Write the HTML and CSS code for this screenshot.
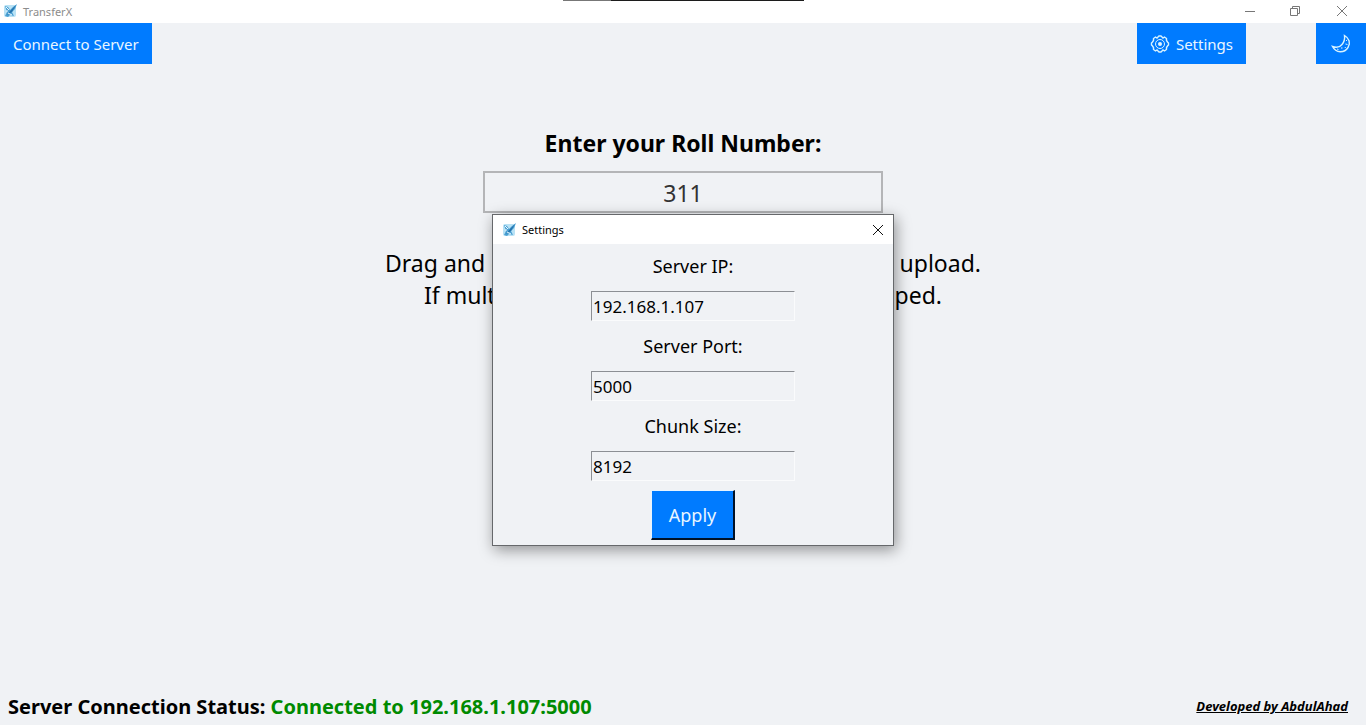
FILE: index.html
```html
<!DOCTYPE html>
<html lang="en">
<head>
<meta charset="utf-8">
<title>TransferX</title>
<link rel="stylesheet" href="styles.css">
</head>
<body>
<svg class="defs" aria-hidden="true">
  <symbol id="logo" viewBox="0 0 16 16">
    <rect x="2" y="2" width="12" height="12" rx="2" fill="#b9e2f5"/>
    <path d="M3 3l3 1 2 3 3-3 4-3-2 5-3 3 2 4-4-1-2 2-3-1 2-4z" fill="#4a9fd2"/>
    <path d="M14 2L9 7l-4 5 5-3z" fill="#2472ac"/>
    <path d="M4 4l3 3M6 10l4 2M4 8h2" stroke="#edfaff"/>
  </symbol>
</svg>
<header class="titlebar">
  <svg class="logo"><use href="#logo"/></svg>
  <span class="app-name">TransferX</span>
  <div class="window-buttons">
    <button class="window-button" aria-label="Minimize"><svg viewBox="0 0 12 12"><path d="M1 6.500h10"/></svg></button>
    <button class="window-button" aria-label="Restore"><svg viewBox="0 0 12 12"><path d="M1.500 3.500h7v7h-7zM3.500 3.500v-2h7v7h-2"/></svg></button>
    <button class="window-button" aria-label="Close"><svg viewBox="0 0 12 12"><path d="M1 1l10 10M11 1L1 11"/></svg></button>
  </div>
</header>
<div class="top-edge"></div>
<nav class="toolbar">
  <button class="tool connect">Connect to Server</button>
  <button class="tool settings">
    <svg class="gear" viewBox="0 0 20 20"><path d="M8 3l1-1h2l1 1 1 1 1.500-1 2 1.500v2l1 1.500 1 1v2l-1 1-1 1.500v2l-2 1.500-1.500-1-1 1-1 1H9l-1-1-1-1-1.500 1-2-1.500v-2l-1-1.500-1-1V9l1-1 1-1.500v-2L5.500 3 7 4z"/><circle class="ring" cx="10" cy="10" r="4.500"/><circle class="hub" cx="10" cy="10" r="2"/></svg>
    Settings
  </button>
  <button class="tool theme" aria-label="Dark mode">
    <svg class="moon" viewBox="0 0 20 20"><path d="M13.500 1.500C18 4 20 9 17 13.500 13.500 19 5 19.500 1.500 12.500c4 1.500 7.500.5 9.500-2 2.500-3 3-5.500 2.500-9z"/><path class="craters" d="M15 6l1 1M14.500 10l2 .5M10 14h1.500M6 15l1.500.5M14 13l.5 1"/></svg>
  </button>
</nav>
<main class="content">
  <label class="roll-label" for="roll">Enter your Roll Number:</label>
  <input class="roll" id="roll" value="311">
  <p class="hint">Drag and drop your files and folders on here to upload.<br>If multiple files are dropped, they will be zipped.</p>
</main>
<footer class="statusbar">
  <p class="status">Server Connection Status: <span class="connected">Connected to 192.168.1.107:5000</span></p>
  <a class="credit" href="#">Developed by AbdulAhad</a>
</footer>
<section class="dialog" role="dialog" aria-labelledby="dialog-title">
  <header class="dialog-bar">
    <svg class="logo"><use href="#logo"/></svg>
    <span id="dialog-title">Settings</span>
    <button class="dialog-close" aria-label="Close settings"><svg viewBox="0 0 12 12"><path d="M1 1l10 10M11 1L1 11"/></svg></button>
  </header>
  <form class="form">
    <label class="field-label" for="ip">Server IP:</label>
    <input class="field" id="ip" value="192.168.1.107">
    <label class="field-label" for="port">Server Port:</label>
    <input class="field" id="port" value="5000">
    <label class="field-label" for="chunk">Chunk Size:</label>
    <input class="field" id="chunk" value="8192">
    <button class="apply" type="button">Apply</button>
  </form>
</section>
</body>
</html>
```
FILE: styles.css
```css
* { box-sizing: border-box; }

body {
  margin: 0;
  min-height: 100vh;
  display: flex;
  flex-direction: column;
  position: relative;
  background: #f0f2f5;
  color: #000;
  font-family: "Noto Sans", "Open Sans", sans-serif;
}

button, input { font-family: inherit; }
button { padding: 0; border: 0; background: none; }
p { margin: 0; }
.defs { position: absolute; width: 0; height: 0; }

.titlebar {
  display: flex;
  align-items: center;
  height: 23px;
  padding: 0 0 1px 2px;
  background: #fff;
  color: #8c8c8c;
  font-size: 11px;
}
.logo { width: 16px; height: 16px; flex: none; }
.app-name { margin-left: 5px; }
.window-buttons { display: flex; margin-left: auto; height: 20px; }
.window-button {
  width: 46px;
  display: flex;
  align-items: center;
  justify-content: center;
}
.window-button svg { width: 12px; height: 12px; fill: none; stroke: #777; }
.window-button:first-child { width: 44px; }
.window-button:last-child { width: 48px; }

.top-edge {
  position: absolute;
  top: 0;
  left: 50%;
  width: 241px;
  height: 1px;
  margin-left: -120px;
  background: linear-gradient(to right, #777 48px, #1c1c1c 48px);
}

.toolbar { display: flex; }
.tool {
  display: flex;
  align-items: center;
  justify-content: center;
  gap: 6px;
  height: 41px;
  padding: 0 13px;
  background: #007bff;
  color: #e9f6ff;
  font-size: 15px;
}
.tool svg { fill: none; stroke: #d8f3ff; stroke-width: 1.4; }
.settings { margin-left: auto; }
.gear, .moon { width: 20px; height: 20px; }
.gear .ring, .moon .craters { stroke-width: 1; }
.gear .hub { fill: #e2f5ff; stroke: none; }
.theme { width: 50px; margin-left: 70px; }

.content {
  flex: 1;
  display: flex;
  flex-direction: column;
  align-items: center;
  padding-top: 63px;
}
.roll-label { font-size: 23px; font-weight: 700; line-height: 32px; }
.roll {
  width: 400px;
  height: 42px;
  margin-top: 12px;
  padding: 2px 0 0;
  border: 2px solid #b4b5b7;
  background: #f0f2f5;
  color: #333;
  font-size: 23px;
  text-align: center;
}
.hint {
  margin-top: 34px;
  font-size: 23px;
  line-height: 32px;
  text-align: center;
  white-space: nowrap;
}

.statusbar {
  display: flex;
  align-items: center;
  justify-content: space-between;
  height: 38px;
  padding: 0 18px 0 8px;
}
.status { font-size: 20px; font-weight: 700; }
.connected { color: #008a00; }
.credit {
  color: #000;
  font-size: 13px;
  font-weight: 700;
  font-style: italic;
}

.dialog {
  position: absolute;
  top: 214px;
  left: 50%;
  width: 402px;
  margin-left: -191px;
  border: 1px solid #66686b;
  background: #f0f2f5;
  box-shadow: 2px 4px 14px rgba(0, 0, 0, 0.4);
}
.dialog-bar {
  display: flex;
  align-items: center;
  height: 29px;
  padding: 0 9px 0 8px;
  background: #fff;
  font-size: 11px;
}
.dialog-bar .logo { margin-right: 5px; }
.dialog-close { margin-left: auto; width: 12px; height: 12px; }
.dialog-close svg { display: block; fill: none; stroke: #111; }

.form {
  display: flex;
  flex-direction: column;
  align-items: center;
  padding: 7px 0 5px;
}
.field-label { font-size: 18px; line-height: 30px; }
.field {
  width: 204px;
  height: 30px;
  margin: 10px 0;
  padding: 0 1px;
  border: 1px solid #fafbfc;
  border-top-color: #8c8f94;
  border-left-color: #8c8f94;
  background: #f0f2f5;
  font-size: 17px;
}
.field:last-of-type { margin-bottom: 9px; }
.apply {
  width: 84px;
  height: 50px;
  border: 1px solid #e8f4ff;
  border-right: 2px solid #001228;
  border-bottom: 2px solid #001228;
  background: #007bff;
  color: #e9f6ff;
  font-size: 18px;
}
```
